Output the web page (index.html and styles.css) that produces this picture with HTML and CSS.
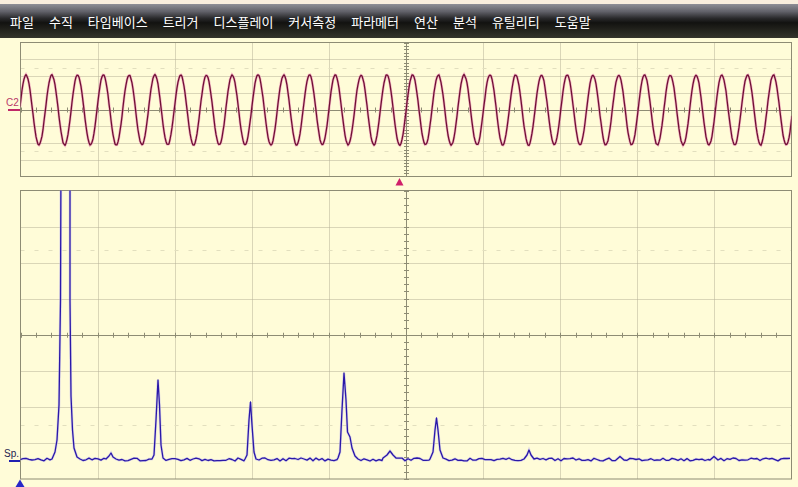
FILE: index.html
```html
<!DOCTYPE html>
<html lang="ko">
<head>
  <meta charset="UTF-8" />
  <title>Scope</title>
  <link rel="stylesheet" href="styles.css">
</head>
<body>

  <div class="top-strip"></div>
  <nav class="menubar">
    <span>파일</span>
    <span>수직</span>
    <span>타임베이스</span>
    <span>트리거</span>
    <span>디스플레이</span>
    <span>커서측정</span>
    <span>파라메터</span>
    <span>연산</span>
    <span>분석</span>
    <span>유틸리티</span>
    <span>도움말</span>
  </nav>

  <div class="scope">
    <svg id="screen" width="798" height="449" viewBox="0 38 798 449">
      <defs>
        <clipPath id="clipTop"><rect x="20.5" y="42.5" width="771" height="134" /></clipPath>
        <clipPath id="clipBottom"><rect x="20.5" y="190.5" width="771" height="288.5" /></clipPath>
      </defs>

      <g id="gridTop"></g>
      <g id="gridBottom"></g>

      <rect class="frame" x="20.5" y="42.5" width="771" height="134" />
      <rect class="frame" x="20.5" y="190.5" width="771" height="288.5" />

      <g clip-path="url(#clipTop)">
        <path id="sineGlow" class="sine-glow" d="" />
        <path id="sine" class="sine" d="" />
      </g>
      <g clip-path="url(#clipBottom)">
        <path id="specGlow" class="spec-glow" d="" />
        <path id="spec" class="spec" d="" />
      </g>

      <text class="label-c2" x="6" y="106">C2</text>
      <line class="marker-c2" x1="8" y1="110" x2="20" y2="110" />
      <text class="label-sp" x="4" y="457">Sp.</text>
      <line class="marker-sp" x1="9" y1="461" x2="20" y2="461" />

      <polygon class="trig" points="399.5,178 395.5,185.5 403.5,185.5" />
      <polygon class="origin" points="20,479.5 15.5,487 24.5,487" />
    </svg>
  </div>

  <script>
    const NS = "http://www.w3.org/2000/svg";
    const left = 20.5, right = 791.5;
    const divX = 77.1;

    let seed = 7;
    function rnd() {
      seed = (seed * 9301 + 49297) % 233280;
      return seed / 233280;
    }

    function line(group, x1, y1, x2, y2, cls) {
      const l = document.createElementNS(NS, "line");
      l.setAttribute("x1", x1);
      l.setAttribute("y1", y1);
      l.setAttribute("x2", x2);
      l.setAttribute("y2", y2);
      l.setAttribute("class", cls);
      group.appendChild(l);
    }

    function drawGrid(id, top, height, faint) {
      const g = document.getElementById(id);
      const bottom = top + height;
      const divY = height / 8;
      const midY = top + divY * 4;
      const midX = left + divX * 5;

      for (let i = 1; i < 10; i++) {
        if (i === 5) continue;
        const x = Math.round(left + divX * i) + 0.5;
        line(g, x, top, x, bottom, "grid");
      }
      for (let j = 1; j < 8; j++) {
        if (j === 4) continue;
        const y = Math.round(top + divY * j) + 0.5;
        line(g, left, y, right, y, "grid");
      }
      faint.forEach(y => line(g, left, y, right, y, "faint"));

      line(g, left, Math.round(midY) + 0.5, right, Math.round(midY) + 0.5, "axis");
      line(g, Math.round(midX) + 0.5, top, Math.round(midX) + 0.5, bottom, "axis");

      for (let x = left; x < right; x += divX / 5) {
        const tx = Math.round(x) + 0.5;
        line(g, tx, midY - 2, tx, midY + 3, "tick");
      }
      for (let y = top; y < bottom; y += divY / 5) {
        const ty = Math.round(y) + 0.5;
        line(g, midX - 2, ty, midX + 3, ty, "tick");
      }
    }

    drawGrid("gridTop", 42.5, 134, [68.5, 151.5]);
    drawGrid("gridBottom", 190.5, 288.5, [250.5, 425.5]);

    // C2 waveform
    let d = "";
    for (let x = 20; x <= 792; x += 1) {
      const y = 110 - 35 * Math.sin(2 * Math.PI * (x - 19.6) / 25.77) + (rnd() - 0.5) * 1.2;
      d += (x === 20 ? "M" : "L") + x + " " + y.toFixed(1) + " ";
    }
    document.getElementById("sine").setAttribute("d", d);
    document.getElementById("sineGlow").setAttribute("d", d);

    // spectrum
    const peaks = [
      [[52,459],[55,452],[57,440],[59,405],[60.5,300],[61,150],[70,150],[70,300],[71,396],[72.5,430],[74,448],[77,457],[80,459]],
      [[106,459],[109,456],[111,453],[113,457],[116,459]],
      [[152,459],[154,455],[156,420],[158,380],[159.5,405],[161,445],[163,458]],
      [[245,459],[247,455],[249,420],[250.5,402],[252,425],[254,452],[256,459]],
      [[338,458],[340,452],[342,410],[344,373],[346,400],[347.5,432],[350,437],[352,448],[355,456],[358,459]],
      [[383,458],[387,455],[390,451],[393,455],[396,458]],
      [[430,459],[433,452],[435,430],[436.5,418],[438,430],[440,450],[443,458]],
      [[524,459],[527,455],[529,450],[531,455],[534,459]],
      [[616,460],[620,456.5],[624,460]],
      [[710,460],[714,456.5],[718,460]]
    ];
    let pts = [];
    let x = 20;
    let p = 0;
    while (x <= 792) {
      if (p < peaks.length && x >= peaks[p][0][0]) {
        pts = pts.concat(peaks[p]);
        x = peaks[p][peaks[p].length - 1][0] + 3;
        p++;
        continue;
      }
      pts.push([x, 459.5 + (rnd() - 0.5) * 3]);
      x += 3;
    }
    d = pts.map((pt, i) => (i === 0 ? "M" : "L") + pt[0] + " " + pt[1].toFixed(1)).join(" ");
    document.getElementById("spec").setAttribute("d", d);
    document.getElementById("specGlow").setAttribute("d", d);
  </script>

</body>
</html>
```

FILE: styles.css
```css
html, body {
  margin: 0;
  padding: 0;
  width: 798px;
  height: 487px;
  overflow: hidden;
  background-color: #fffcd8;
  font-family: "Noto Sans CJK KR", "Noto Sans", sans-serif;
}

.top-strip {
  height: 4px;
  background-color: #f8eddd;
}

.menubar {
  height: 34px;
  display: flex;
  align-items: center;
  gap: 15px;
  padding-left: 10px;
  background: linear-gradient(to bottom,
    #8e8e96 0%,
    #62626a 22%,
    #2a2a2c 42%,
    #121210 55%,
    #22221c 75%,
    #35352c 100%);
  color: #ffffff;
  font-size: 13px;
  line-height: 1;
}

.menubar span {
  white-space: nowrap;
}

.scope {
  height: 449px;
}

.scope svg {
  display: block;
}

.frame {
  fill: none;
  stroke: #8e8c74;
  stroke-width: 1;
}

.grid {
  stroke: #b4b196;
  stroke-width: 1;
  stroke-dasharray: 1 1;
}

.faint {
  stroke: #e2dfbe;
  stroke-width: 1;
  stroke-dasharray: 4 10;
}

.axis {
  stroke: #8e8c74;
  stroke-width: 1;
}

.tick {
  stroke: #8e8c74;
  stroke-width: 1;
}

.sine-glow {
  fill: none;
  stroke: #e878b0;
  stroke-width: 2.6;
  opacity: 0.55;
}

.sine {
  fill: none;
  stroke: #701034;
  stroke-width: 1.3;
  stroke-linejoin: round;
}

.spec-glow {
  fill: none;
  stroke: #b8b0f0;
  stroke-width: 2.6;
  opacity: 0.5;
}

.spec {
  fill: none;
  stroke: #2a18a8;
  stroke-width: 1.3;
  stroke-linejoin: round;
}

.label-c2 {
  font-family: "Liberation Sans", Arial, sans-serif;
  font-size: 10px;
  fill: #b83868;
}

.marker-c2 {
  stroke: #c02868;
  stroke-width: 2;
}

.label-sp {
  font-family: "Liberation Sans", Arial, sans-serif;
  font-size: 10px;
  fill: #1c1c50;
}

.marker-sp {
  stroke: #2020b0;
  stroke-width: 2;
}

.trig {
  fill: #d0206a;
}

.origin {
  fill: #2828c8;
}
```
